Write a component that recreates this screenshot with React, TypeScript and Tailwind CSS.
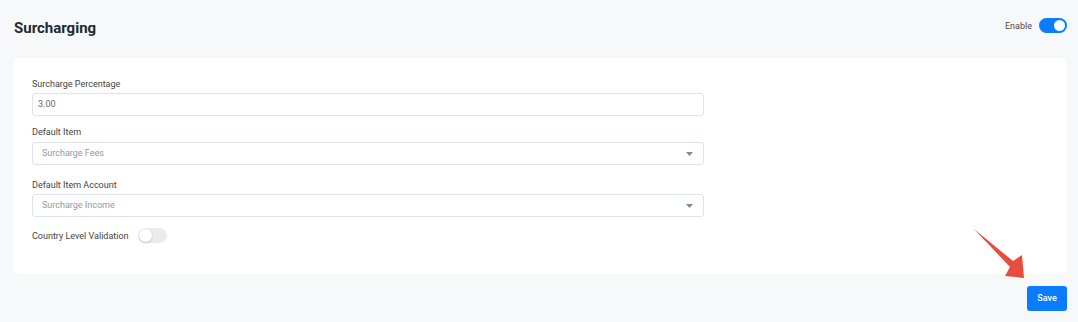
import React from "react";

function Caret() {
  return (
    <svg width="7" height="4" viewBox="0 0 7 4" className="shrink-0">
      <path d="M0 0 L7 0 L3.5 4 Z" fill="#7d8b99" />
    </svg>
  );
}

export default function App() {
  return (
    <div
      className="relative w-full h-[322px] bg-[#f7f8fa] pl-[14px] pr-[12px] overflow-hidden"
      style={{ fontFamily: "Roboto, 'Liberation Sans', sans-serif" }}
    >
      {/* Header */}
      <div className="flex justify-between h-[58px]">
        <h1 className="pt-[19px] text-[15px] leading-[18px] font-bold text-[#222a33]">Surcharging</h1>
        <div className="flex items-center gap-[7px] pt-[18px] h-[33px]">
          <span className="text-[9px] leading-[12px] text-[#4a4a4a]">Enable</span>
          <div className="w-[28px] h-[15px] rounded-full bg-[#0a7cff] flex items-center justify-end pr-[2px] mr-[-1px]">
            <div className="w-[11px] h-[11px] rounded-full bg-white" />
          </div>
        </div>
      </div>

      {/* Card */}
      <div className="bg-white rounded-[4px] h-[216px] pl-[18px] pt-[20px]">
        <div className="w-[672px] flex flex-col">
          <label className="text-[9px] leading-[12px] text-[#444]">Surcharge Percentage</label>
          <div className="mt-[3px] h-[23px] border border-[#e0e4e8] rounded-[3px] flex items-center pl-[5px] text-[9px] text-[#666]">
            3.00
          </div>

          <label className="mt-[10px] text-[9px] leading-[12px] text-[#444]">Default Item</label>
          <div className="mt-[4px] h-[23px] border border-[#e0e4e8] rounded-[3px] flex items-center justify-between pl-[9px] pr-[10px] text-[9px] text-[#8d99a6]">
            <span>Surcharge Fees</span>
            <Caret />
          </div>

          <label className="mt-[14px] text-[9px] leading-[12px] text-[#444]">Default Item Account</label>
          <div className="mt-[3px] h-[23px] border border-[#e0e4e8] rounded-[3px] flex items-center justify-between pl-[9px] pr-[10px] text-[9px] text-[#8d99a6]">
            <span>Surcharge Income</span>
            <Caret />
          </div>

          <div className="mt-[11px] flex items-center gap-[9px] h-[15px]">
            <span className="text-[9px] leading-[12px] text-[#444]">Country Level Validation</span>
            <div className="w-[29px] h-[15px] rounded-full bg-[#e9ecef] flex items-center pl-[1px]">
              <div className="w-[13px] h-[13px] rounded-full bg-white shadow-[0_1px_2px_rgba(0,0,0,0.2)]" />
            </div>
          </div>
        </div>
      </div>

      {/* Save */}
      <div className="flex justify-end mt-[12px] mr-[-1px]">
        <button className="w-[40px] h-[25px] rounded-[3px] bg-[#0a7cff] text-white text-[9px] font-medium">
          Save
        </button>
      </div>

      {/* Annotation arrow */}
      <svg
        className="absolute left-0 top-0 pointer-events-none"
        width="1078"
        height="322"
        viewBox="0 0 1078 322"
      >
        <polygon
          points="974,229 1013,261 1022,255 1024,278 1005,276 1010,267"
          fill="#e74c3c"
        />
      </svg>
    </div>
  );
}
